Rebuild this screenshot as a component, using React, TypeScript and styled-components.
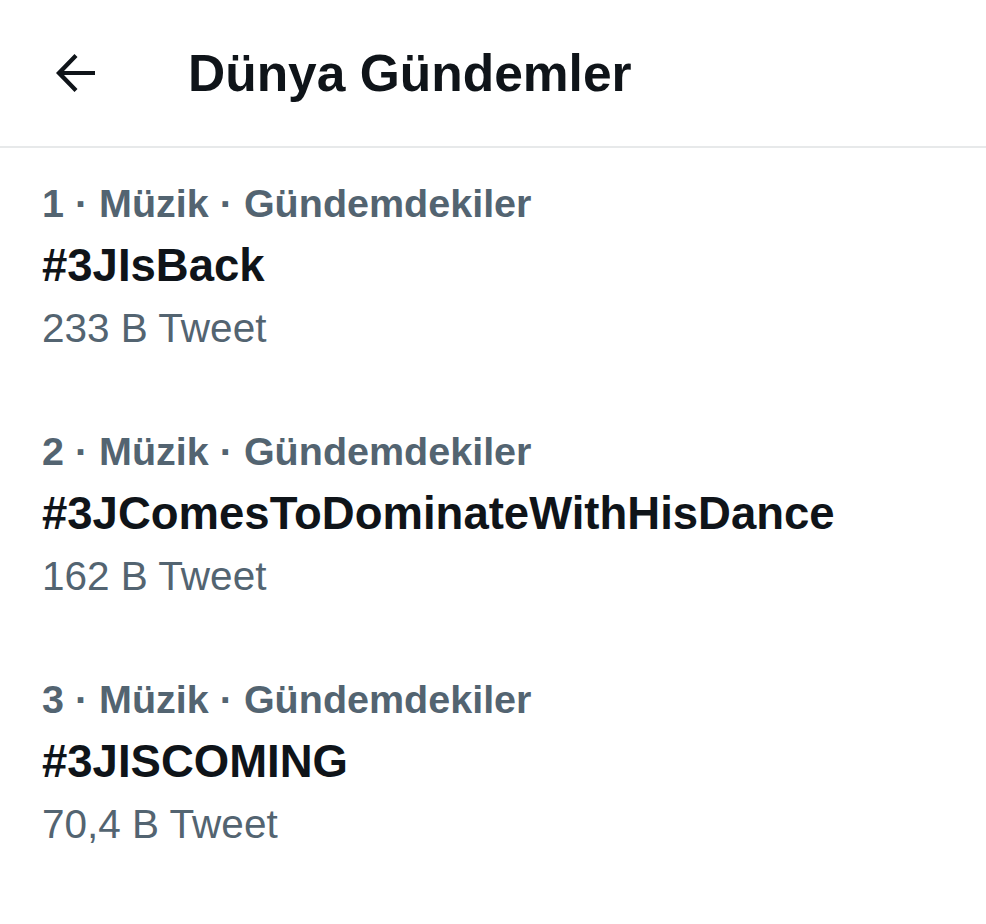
import React from "react";
import styled, { createGlobalStyle } from "styled-components";

const GlobalStyle = createGlobalStyle`
  html, body {
    margin: 0;
    padding: 0;
    background: #ffffff;
    font-family: "Liberation Sans", Arial, sans-serif;
  }
`;

const Page = styled.div`
  width: 986px;
  min-height: 924px;
  background: #ffffff;
  display: flex;
  flex-direction: column;
`;

const Header = styled.header`
  height: 146px;
  display: flex;
  align-items: center;
  padding-left: 45px;
  gap: 83px;
  border-bottom: 2px solid #e7e9ea;
`;

const BackButton = styled.button`
  width: 60px;
  height: 60px;
  padding: 0;
  border: none;
  background: transparent;
  display: flex;
  align-items: center;
  justify-content: center;
  color: #0f1419;
`;

const Title = styled.h1`
  margin: 0;
  font-size: 51.5px;
  line-height: 60px;
  font-weight: 700;
  color: #0f1419;
`;

const List = styled.ul`
  list-style: none;
  margin: 0;
  padding: 0;
`;

const Trend = styled.li`
  display: flex;
  flex-direction: column;
  padding: 24px 42px 38px;
`;

const Meta = styled.div`
  font-size: 39.5px;
  line-height: 62px;
  font-weight: 700;
  color: #536471;
`;

const Hashtag = styled.div`
  font-size: 45.5px;
  line-height: 64px;
  font-weight: 700;
  color: #0f1419;
`;

const Count = styled.div`
  font-size: 40.5px;
  line-height: 60px;
  font-weight: 400;
  color: #536471;
`;

const trends = [
  { rank: 1, name: "#3JIsBack", count: "233 B Tweet" },
  { rank: 2, name: "#3JComesToDominateWithHisDance", count: "162 B Tweet" },
  { rank: 3, name: "#3JISCOMING", count: "70,4 B Tweet" },
];

const BackArrow = () => (
  <svg width="60" height="60" viewBox="0 0 24 24" aria-hidden="true">
    <path
      fill="currentColor"
      d="M7.6 12.8l5.4 5.6-1.2 1.2L4.4 12l7.4-7.6 1.2 1.2L7.6 11.2H20v1.6H7.6z"
    />
  </svg>
);

export default function App() {
  return (
    <Page>
      <GlobalStyle />
      <Header>
        <BackButton aria-label="Geri">
          <BackArrow />
        </BackButton>
        <Title>Dünya Gündemler</Title>
      </Header>
      <List>
        {trends.map((t) => (
          <Trend key={t.rank}>
            <Meta>{t.rank} · Müzik · Gündemdekiler</Meta>
            <Hashtag>{t.name}</Hashtag>
            <Count>{t.count}</Count>
          </Trend>
        ))}
      </List>
    </Page>
  );
}
